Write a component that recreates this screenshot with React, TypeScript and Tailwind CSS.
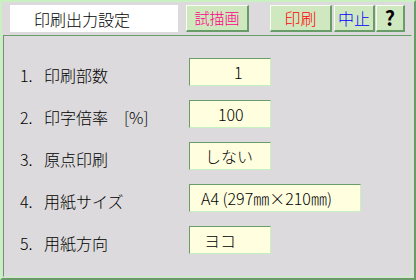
import React from "react";

const font = { fontFamily: '"Noto Sans CJK JP", "Noto Sans", sans-serif' };

function Btn({ w, color, size, children, bold }: { w: string; color: string; size: string; children: React.ReactNode; bold?: boolean }) {
  return (
    <div
      className={`${w} h-[27px] flex items-center justify-center bg-[#d0e8c0] border-t border-l border-t-[#f4fff0] border-l-[#f4fff0] border-b-2 border-r-2 border-b-[#6a9c6a] border-r-[#6a9c6a] ${color} ${size} ${bold ? "font-bold" : "font-light"}`}
    >
      {children}
    </div>
  );
}

const rows = [
  { n: "1.", label: "印刷部数", extra: "", value: "1", w: "w-[82px]", pl: "pl-[44px]" },
  { n: "2.", label: "印字倍率", extra: "[%]", value: "100", w: "w-[82px]", pl: "pl-[28px]" },
  { n: "3.", label: "原点印刷", extra: "", value: "しない", w: "w-[82px]", pl: "pl-[15px]" },
  { n: "4.", label: "用紙サイズ", extra: "", value: "A4 (297㎜×210㎜)", w: "w-[172px]", pl: "pl-[11px]" },
  { n: "5.", label: "用紙方向", extra: "", value: "ヨコ", w: "w-[82px]", pl: "pl-[14px]" },
];

export default function App() {
  return (
    <div
      style={font}
      className="w-[416px] h-[280px] bg-[#dcdadc] border-2 border-t-[#c8f0c0] border-l-[#c8f0c0] border-b-[#6a9c6a] border-r-[#6a9c6a] flex flex-col text-black font-light"
    >
      <div className="h-[33px] flex items-start pt-[3px] pl-[8px]">
        <div className="w-[168px] h-[27px] bg-white flex items-center pl-[24px] text-[16px] leading-none">
          印刷出力設定
        </div>
        <div className="ml-[8px]">
          <Btn w="w-[63px]" color="text-[#ff0088]" size="text-[15px]">試描画</Btn>
        </div>
        <div className="ml-[21px]">
          <Btn w="w-[62px]" color="text-[#ff0000]" size="text-[16px]">印刷</Btn>
        </div>
        <div className="ml-[2px]">
          <Btn w="w-[41px]" color="text-[#0000ff]" size="text-[16px]">中止</Btn>
        </div>
        <div className="ml-[1px]">
          <Btn w="w-[29px]" color="text-black" size="text-[20px]" bold>?</Btn>
        </div>
      </div>
      <div className="ml-[1px] mr-[2px] h-[242px] border border-t-[#6a9c6a] border-l-[#6a9c6a] border-b-[#c8f0c0] border-r-[#c8f0c0] pt-[22px] pl-[16px] flex flex-col gap-[14px]">
        {rows.map((r) => (
          <div key={r.n} className="flex items-center h-[28px]">
            <div className="w-[169px] flex items-center pt-[6px] text-[16px] leading-none">
              <span className="w-[24px]">{r.n}</span>
              <span>{r.label}</span>
              {r.extra && <span className="ml-[16px]">{r.extra}</span>}
            </div>
            <div
              className={`${r.w} h-[28px] bg-[#ffffe0] border border-t-[#6a9c6a] border-l-[#6a9c6a] border-b-[#c8f0c0] border-r-[#c8f0c0] flex items-center ${r.pl} text-[16px] leading-none whitespace-pre`}
            >
              {r.value}
            </div>
          </div>
        ))}
      </div>
    </div>
  );
}
